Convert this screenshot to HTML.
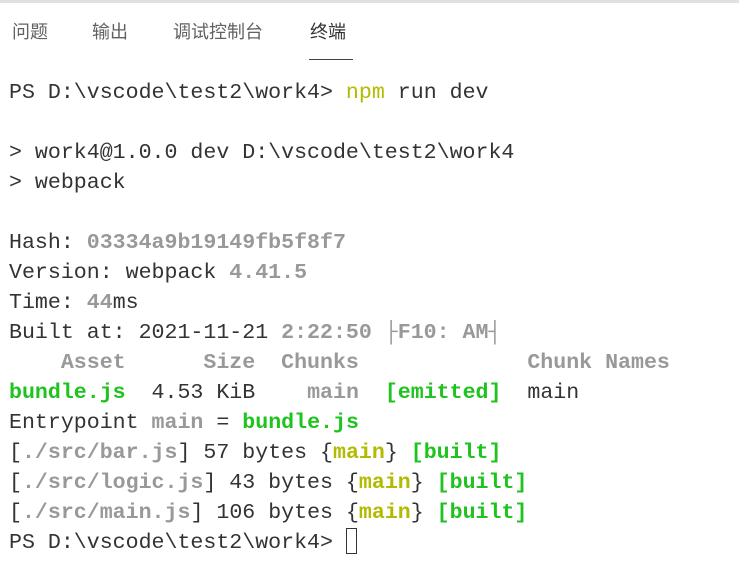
<!DOCTYPE html>
<html><head><meta charset="utf-8"><style>
body{margin:0;width:739px;height:567px;background:#fff;overflow:hidden;position:relative}
.top{position:absolute;left:0;top:0;width:739px;height:3px;background:#e0e0e0}
.tab{position:absolute;top:20px;font:18px/24px "Liberation Sans","Noto Sans CJK SC",sans-serif;color:#616161}
.ul{position:absolute;left:309px;top:59px;width:44px;height:1px;background:#424242}
pre{position:absolute;left:9px;top:78px;margin:0;font:21.6px/30px "Liberation Mono","DejaVu Sans Mono",monospace;color:#333}
.g{color:#999;font-weight:bold}.gr{color:#1ec31e;font-weight:bold}.y{color:#b3bb00}.yb{color:#b3bb00;font-weight:bold}
.cur{display:inline-block;width:11px;height:26px;border:1.5px solid #333;vertical-align:-6px;box-sizing:border-box}
</style></head><body>
<div class="top"></div>
<div class="tab" style="left:12px">问题</div>
<div class="tab" style="left:92px">输出</div>
<div class="tab" style="left:173px">调试控制台</div>
<div class="tab" style="left:310px;color:#333">终端</div>
<div class="ul"></div>
<pre>PS D:\vscode\test2\work4&gt; <span class="y">npm</span> run dev

&gt; work4@1.0.0 dev D:\vscode\test2\work4
&gt; webpack

Hash: <span class="g">03334a9b19149fb5f8f7</span>
Version: webpack <span class="g">4.41.5</span>
Time: <span class="g">44</span>ms
Built at: 2021-11-21 <span class="g">2:22:50 ├F10: AM┤</span>
<span class="g">    Asset      Size  Chunks             Chunk Names</span>
<span class="gr">bundle.js</span>  4.53 KiB    <span class="g">main</span>  <span class="gr">[emitted]</span>  main
Entrypoint <span class="g">main</span> = <span class="gr">bundle.js</span>
[<span class="g">./src/bar.js</span>] 57 bytes {<span class="yb">main</span>} <span class="gr">[built]</span>
[<span class="g">./src/logic.js</span>] 43 bytes {<span class="yb">main</span>} <span class="gr">[built]</span>
[<span class="g">./src/main.js</span>] 106 bytes {<span class="yb">main</span>} <span class="gr">[built]</span>
PS D:\vscode\test2\work4&gt; <span class="cur"></span></pre>
</body></html>
